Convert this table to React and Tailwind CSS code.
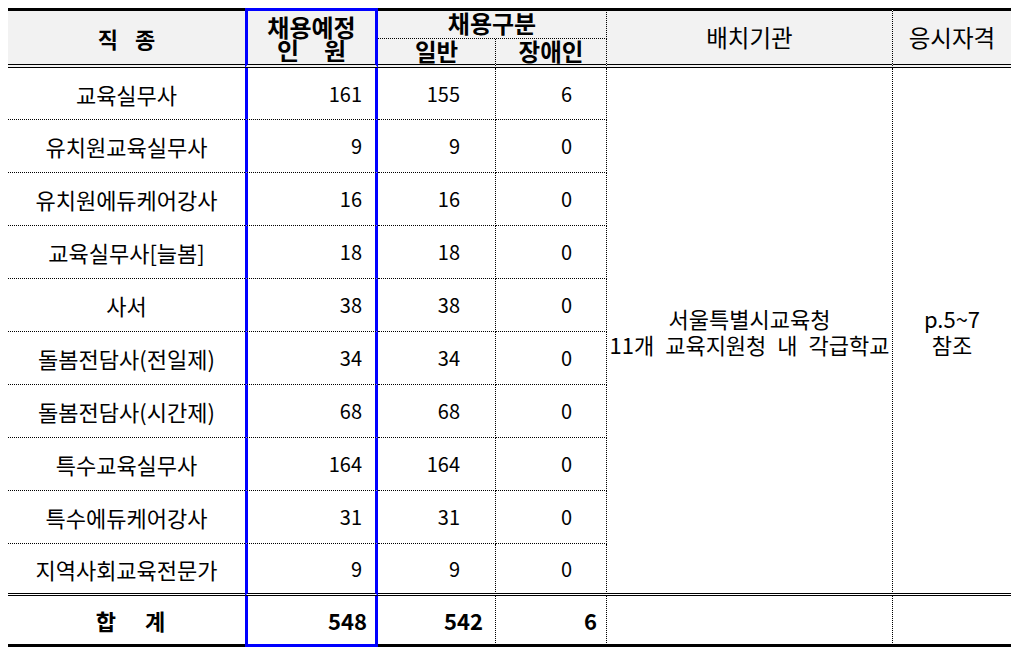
import React from "react";

const rows = [
  ["교육실무사", 161, 155, 6],
  ["유치원교육실무사", 9, 9, 0],
  ["유치원에듀케어강사", 16, 16, 0],
  ["교육실무사[늘봄]", 18, 18, 0],
  ["사서", 38, 38, 0],
  ["돌봄전담사(전일제)", 34, 34, 0],
  ["돌봄전담사(시간제)", 68, 68, 0],
  ["특수교육실무사", 164, 164, 0],
  ["특수에듀케어강사", 31, 31, 0],
  ["지역사회교육전문가", 9, 9, 0],
];

export default function App() {
  return (
    <div className="w-[1019px] h-[654px] bg-white pt-[8px] pl-[8px] font-['Noto_Sans_CJK_KR',sans-serif] text-black">
      <div className="grid w-[1003px] grid-cols-[237px_133px_118px_111px_286px_118px] grid-rows-[31px_29px_52px_repeat(8,53px)_52px_51px]">
        {/* header */}
        <div className="row-span-2 flex items-center justify-center gap-[17px] bg-[#f2f2f2] border-t-[3px] border-b-4 border-black [border-bottom-style:double] text-[22px] font-bold leading-none">
          <span>직</span>
          <span>종</span>
        </div>
        <div className="row-span-2 flex flex-col items-center justify-center bg-[#f2f2f2] border-t-[3px] border-x-[3px] border-[#0000ff] border-b-4 border-b-black [border-bottom-style:double] text-[24px] font-bold leading-[23px]">
          <span>채용예정</span>
          <span className="flex gap-[25px]">
            <span>인</span>
            <span>원</span>
          </span>
        </div>
        <div className="col-span-2 flex items-center justify-center pb-[3px] bg-[#f2f2f2] border-t-[3px] border-b border-r border-black [border-bottom-style:dotted] [border-right-style:dotted] text-[24px] font-bold leading-none">
          채용구분
        </div>
        <div className="row-span-2 flex items-center justify-center bg-[#f2f2f2] border-t-[3px] border-r border-b-4 border-black [border-right-style:dotted] [border-bottom-style:double] text-[23.5px] leading-none">
          배치기관
        </div>
        <div className="row-span-2 flex items-center justify-center bg-[#f2f2f2] border-t-[3px] border-b-4 border-black [border-bottom-style:double] text-[23.5px] leading-none">
          응시자격
        </div>
        <div className="flex items-center justify-center bg-[#f2f2f2] border-r border-b-4 border-black [border-right-style:dotted] [border-bottom-style:double] text-[23.5px] font-bold leading-none">
          일반
        </div>
        <div className="flex items-center justify-center bg-[#f2f2f2] border-r border-b-4 border-black [border-right-style:dotted] [border-bottom-style:double] text-[23.5px] font-bold leading-none">
          장애인
        </div>

        {/* data rows */}
        {rows.map((r, i) => {
          const last = i === rows.length - 1;
          return (
            <React.Fragment key={i}>
              <div
                className={
                  last
                    ? "flex items-center justify-center border-b-[3px] border-black [border-bottom-style:double] text-[22px] leading-none"
                    : "flex items-center justify-center border-b border-black [border-bottom-style:dotted] text-[22px] leading-none"
                }
              >
                {r[0]}
              </div>
              <div
                className={
                  last
                    ? "flex items-center justify-end pr-[13px] border-x-[3px] border-x-[#0000ff] border-b-[3px] border-b-black [border-bottom-style:double] text-[20px] leading-none"
                    : "flex items-center justify-end pr-[13px] border-x-[3px] border-x-[#0000ff] border-b border-b-black [border-bottom-style:dotted] text-[20px] leading-none"
                }
              >
                {r[1]}
              </div>
              <div
                className={
                  last
                    ? "flex items-center justify-end pr-[35px] border-r border-b-[3px] border-black [border-right-style:dotted] [border-bottom-style:double] text-[20px] leading-none"
                    : "flex items-center justify-end pr-[35px] border-r border-b border-black [border-right-style:dotted] [border-bottom-style:dotted] text-[20px] leading-none"
                }
              >
                {r[2]}
              </div>
              <div
                className={
                  last
                    ? "flex items-center justify-end pr-[34px] border-r border-b-[3px] border-black [border-right-style:dotted] [border-bottom-style:double] text-[20px] leading-none"
                    : "flex items-center justify-end pr-[34px] border-r border-b border-black [border-right-style:dotted] [border-bottom-style:dotted] text-[20px] leading-none"
                }
              >
                {r[3]}
              </div>
              {i === 0 && (
                <>
                  <div className="row-span-10 flex flex-col items-center justify-center border-r border-b-[3px] border-black [border-right-style:dotted] [border-bottom-style:double] text-[22px] leading-[26px]">
                    <span>서울특별시교육청</span>
                    <span className="[word-spacing:6px]">11개 교육지원청 내 각급학교</span>
                  </div>
                  <div className="row-span-10 flex flex-col items-center justify-center border-b-[3px] border-black [border-bottom-style:double] text-[22px] leading-[26px]">
                    <span>p.5~7</span>
                    <span>참조</span>
                  </div>
                </>
              )}
            </React.Fragment>
          );
        })}

        {/* total row */}
        <div className="flex items-center justify-center gap-[29px] border-b-[3px] border-black text-[22px] font-bold leading-none pl-[8px]">
          <span>합</span>
          <span>계</span>
        </div>
        <div className="flex items-center justify-end pr-[8px] border-x-[3px] border-b-[3px] border-[#0000ff] text-[22px] font-bold leading-none">
          548
        </div>
        <div className="flex items-center justify-end pr-[12px] border-r border-b-[3px] border-black [border-right-style:dotted] text-[22px] font-bold leading-none">
          542
        </div>
        <div className="flex items-center justify-end pr-[9px] border-r border-b-[3px] border-black [border-right-style:dotted] text-[22px] font-bold leading-none">
          6
        </div>
        <div className="border-r border-b-[3px] border-black [border-right-style:dotted]"></div>
        <div className="border-b-[3px] border-black"></div>
      </div>
    </div>
  );
}
